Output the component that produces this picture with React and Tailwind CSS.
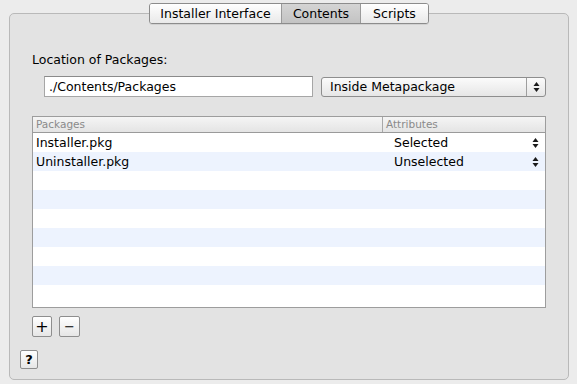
import React from 'react';

const font = { fontFamily: '"DejaVu Sans", "Liberation Sans", sans-serif' };

const Stepper = ({ className = '' }) => (
  <svg className={className} width="7" height="12" viewBox="0 0 7 12">
    <path d="M3.5 1 L6.5 5 L0.5 5 Z" fill="#1a1a1a" />
    <path d="M3.5 11 L6.5 7 L0.5 7 Z" fill="#1a1a1a" />
  </svg>
);

const rows = [
  { name: 'Installer.pkg', attr: 'Selected' },
  { name: 'Uninstaller.pkg', attr: 'Unselected' },
  null, null, null, null, null, null, null,
];

export default function App() {
  return (
    <div className="w-[577px] h-[384px] bg-[#ececec] pt-[3px] overflow-hidden text-black" style={font}>
      {/* Tabs */}
      <div className="relative z-10 ml-[149px] flex h-[21px] w-[280px] rounded-[3px] border border-[#8c8c8c] overflow-hidden text-[12.5px] leading-[19px] shadow-[0_1px_0_rgba(0,0,0,0.08)]">
        <div className="w-[132px] text-center bg-gradient-to-b from-[#ffffff] to-[#e9e9e9] border-r border-[#9a9a9a]">Installer Interface</div>
        <div className="w-[79px] text-center bg-gradient-to-b from-[#d4d4d4] to-[#c3c3c3] border-r border-[#9a9a9a]">Contents</div>
        <div className="flex-1 text-center bg-gradient-to-b from-[#ffffff] to-[#e9e9e9]">Scripts</div>
      </div>

      {/* Panel */}
      <div className="-mt-[11px] ml-[9px] w-[560px] h-[367px] rounded-[5px] border border-[#b9b9b9] bg-[#e3e3e3] pt-[38px] pl-[22px]">
        <div className="text-[12.5px] leading-[16px]">Location of Packages:</div>

        <div className="mt-[8px] flex items-start">
          <div className="ml-[12px] w-[269px] h-[21px] bg-white border border-[#a6a6a6] border-t-[#8a8a8a] pl-[4px] text-[12.5px] leading-[19px]">
            ./Contents/Packages
          </div>
          <div className="ml-[8px] mt-[1px] w-[225px] h-[20px] flex rounded-[3px] border border-[#8e8e8e] bg-gradient-to-b from-[#fbfbfb] to-[#e6e6e6] text-[12.5px] leading-[18px]">
            <div className="flex-1 pl-[8px]">Inside Metapackage</div>
            <div className="w-[19px] border-l border-[#9e9e9e] flex items-center justify-center">
              <Stepper />
            </div>
          </div>
        </div>

        {/* Table */}
        <div className="mt-[19px] w-[514px] h-[192px] border border-[#9d9d9d] bg-white overflow-hidden">
          <div className="flex h-[16px] border-b border-[#9a9a9a] bg-gradient-to-b from-[#f5f5f5] to-[#e4e4e4] text-[10.5px] leading-[15px] text-[#8a8a8a]">
            <div className="w-[350px] pl-[3px] border-r border-[#a8a8a8]">Packages</div>
            <div className="flex-1 pl-[3px]">Attributes</div>
          </div>
          {rows.map((r, i) => (
            <div key={i} className={`flex h-[19px] text-[12.5px] leading-[19px] ${i % 2 === 1 ? 'bg-[#edf3fe]' : 'bg-white'}`}>
              {r && (
                <>
                  <div className="w-[351px] pl-[3px]">{r.name}</div>
                  <div className="flex-1 pl-[10px]">{r.attr}</div>
                  <div className="w-[13px] flex items-center">
                    <Stepper />
                  </div>
                </>
              )}
            </div>
          ))}
        </div>

        {/* Add / remove */}
        <div className="mt-[8px] flex gap-[7px]">
          <div className="w-[20px] h-[21px] rounded-[2px] border border-[#8e8e8e] bg-gradient-to-b from-[#ffffff] to-[#e6e6e6] flex items-center justify-center text-[16px] leading-none">+</div>
          <div className="w-[21px] h-[21px] rounded-[2px] border border-[#8e8e8e] bg-gradient-to-b from-[#ffffff] to-[#e6e6e6] flex items-center justify-center text-[13px] leading-none">−</div>
        </div>

        {/* Help */}
        <div className="mt-[13px] -ml-[12px] w-[18px] h-[19px] rounded-[2px] border border-[#8e8e8e] bg-gradient-to-b from-[#ffffff] to-[#e6e6e6] flex items-center justify-center text-[13px] font-bold leading-none">?</div>
      </div>
    </div>
  );
}
